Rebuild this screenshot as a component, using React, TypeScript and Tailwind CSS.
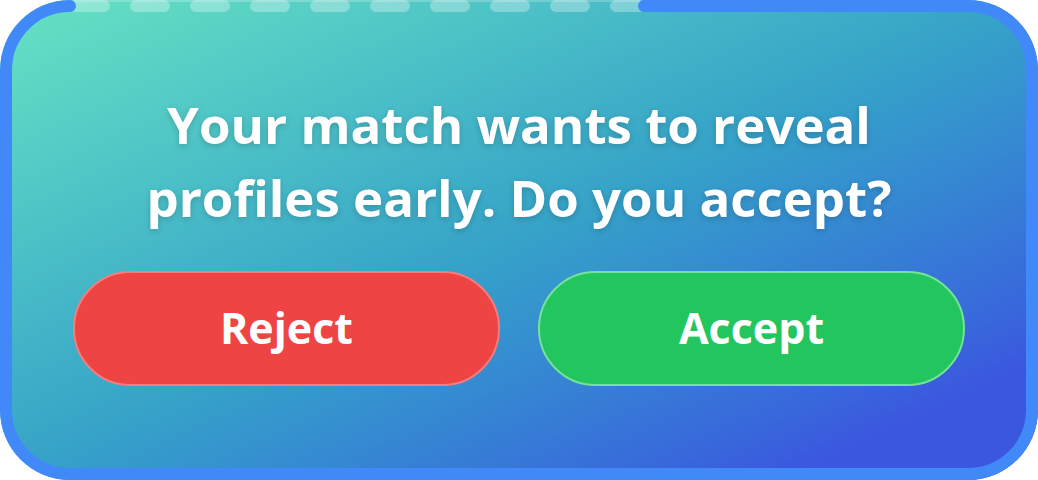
import React from "react";

export default function App() {
  return (
    <div className="w-[1038px] h-[480px] bg-white">
      <div
        className="relative w-[1038px] h-[480px] rounded-[70px] overflow-hidden bg-linear-to-br from-[#62ddc3] from-5% via-[#36a2c8] via-50% to-[#3b56df] to-88% flex flex-col items-center pt-[88px] px-[73px]"
        style={{ fontFamily: '"Open Sans", "Noto Sans", sans-serif' }}
      >
        <h1 className="text-white font-bold text-[51px] leading-[73px] text-center whitespace-nowrap [text-shadow:0_2px_6px_rgba(0,0,0,0.18)]">
          Your match wants to reveal
          <br />
          profiles early. Do you accept?
        </h1>
        <div className="mt-[37px] grid w-full grid-cols-2 gap-[38px]">
          <button className="h-[115px] rounded-full bg-[#ef4444] border-2 border-[#f87c7c] text-white font-bold text-[43px]">
            Reject
          </button>
          <button className="h-[115px] rounded-full bg-[#22c55e] border-2 border-[#74e29b] text-white font-bold text-[43px]">
            Accept
          </button>
        </div>
        <svg
          className="absolute inset-0 pointer-events-none"
          width="1038"
          height="480"
          viewBox="0 0 1038 480"
          fill="none"
        >
          <line x1="70" y1="1" x2="640" y2="1" stroke="rgba(255,255,255,0.22)" strokeWidth="2" />
          <path
            d="M76 6 H640"
            stroke="rgba(255,255,255,0.3)"
            strokeWidth="12"
            strokeLinecap="round"
            strokeDasharray="28 32"
          />
          <path
            d="M644 6 H968 A64 64 0 0 1 1032 70 V410 A64 64 0 0 1 968 474 H70 A64 64 0 0 1 6 410 V70 A64 64 0 0 1 70 6"
            stroke="#4189f8"
            strokeWidth="12"
            strokeLinecap="round"
          />
        </svg>
      </div>
    </div>
  );
}
